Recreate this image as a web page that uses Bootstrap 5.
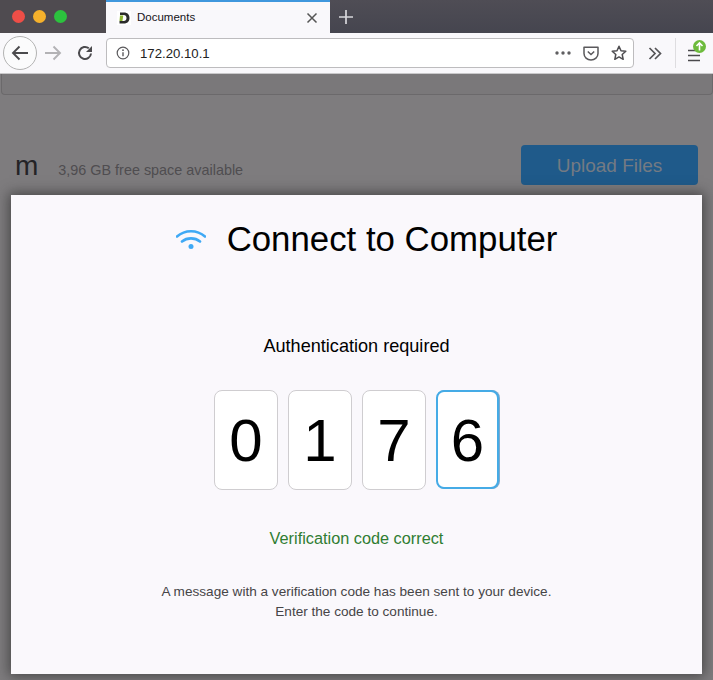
<!DOCTYPE html>
<html lang="en">
<head>
<meta charset="utf-8">
<title>Documents</title>
<link rel="stylesheet" href="https://cdn.jsdelivr.net/npm/bootstrap@5.3.0/dist/css/bootstrap.min.css">
<style>
html,body{height:680px;overflow:hidden;}
body{font-family:"Liberation Sans",Arial,sans-serif;background:#7e7c7e;position:relative;color:#000;}
.tabbar{height:33px;background:linear-gradient(#4f4d55,#45454f);}
.lights{width:106px;padding-left:12px;gap:8px;background:#4f4b50;height:33px;}
.light{width:13px;height:13px;border-radius:50%;}
.tabitem{width:224px;height:33px;background:#f9f8fb;border-top:2px solid #3f97dd;padding:0 12px 0 11px;font-size:11.500px;color:#15141a;}
.favbox{width:14px;height:14px;background:#fff;}
.tabname{margin-left:6px;}
.tabclose{margin-left:auto;}
.newtab{margin-left:9px;}
.toolbar{height:41px;background:#f9f8fb;border-bottom:1px solid #c9c8ca;padding-left:3px;}
.backbtn{width:34px;height:34px;border:1px solid #b3b3b3;border-radius:50%;background:#fbfbfc;}
.forward{margin-left:7px;}
.reload{margin-left:15px;}
.urlbar{width:528px;height:30px;margin-left:13px;background:#fff;border:1px solid #bdbcbe;border-radius:4px;padding:0 6px 0 9px;font-size:13.200px;color:#222;}
.urltext{margin-left:10px;padding-top:1px;}
.dots{margin-left:auto;}
.pocket{margin-left:12px;}
.star{margin-left:12px;}
.chev{margin-left:14px;}
.sep{width:1px;height:30px;background:#dedde0;margin-left:13px;}
.menuwrap{margin-left:12px;position:relative;width:20px;height:30px;}
.upbadge{position:absolute;left:5px;top:2px;}
.pagebar{height:21px;margin:0 0 0 1px;background:#7a787a;border:1px solid #6b696b;border-top:0;border-radius:0 0 4px 4px;}
.pagerow{margin-top:50px;height:40px;padding:0 15px 0 15px;}
.mlet{font-size:28px;line-height:40px;color:#242326;padding-top:2px;}
.freeinfo{font-size:14.400px;color:#4f4d50;margin-left:20px;padding-top:12px;}
.uploadbtn{margin-left:auto;width:177px;height:40px;background:#1f5a8a;border:0;border-radius:4px;color:#747a83;font-size:19px;padding:2px 0 0;}
.dialogbox{position:absolute;left:11px;top:195px;width:691px;height:479px;background:#faf8fc;box-shadow:0 0 12px 2px rgba(40,40,40,.65);}
.dialoghead{height:88px;padding-left:20px;}
.dialogtitle{font-size:34.800px;font-weight:400;margin:0 0 0 21px;line-height:88px;color:#000;}
.authtext{font-size:18.100px;margin-top:49px;line-height:28px;color:#000;}
.codegrid{gap:10px;margin-top:30px;}
.digit{width:64px;height:100px;background:#fff;border:1px solid #cfcdd0;border-radius:8px;font-size:60px;line-height:100px;text-align:center;color:#000;}
.digit-on{width:63px;height:99px;border:2px solid #45abe6;box-shadow:1px 0 0 #7fa9cc;line-height:98px;}
.okmsg{color:#2f7d32;font-size:16.300px;margin-top:36px;line-height:24px;}
.helptext{font-size:13.600px;line-height:20px;color:#464547;margin-top:32px;}
</style>
</head>
<body>
<div class="tabbar d-flex">
  <div class="lights d-flex align-items-center">
    <span class="light" style="background:#ee4e47"></span>
    <span class="light" style="background:#f5b12c"></span>
    <span class="light" style="background:#2cc23e"></span>
  </div>
  <div class="tabitem d-flex align-items-center">
    <svg class="favbox" viewBox="0 0 14 14"><path d="M3 1.500h4c3.400 0 5.500 2.100 5.500 5.500s-2.100 5.500-5.500 5.500H2.500V10h4.200c1.700 0 2.800-1.200 2.800-3S8.400 4 6.700 4H3z" fill="#2b2b2b"/><path d="M3 4.500h3.300L5.400 10H2.500z" fill="#8cb52f"/></svg>
    <span class="tabname">Documents</span>
    <svg class="tabclose" width="12" height="12" viewBox="0 0 12 12"><path d="M1.500 1.500l9 9M10.500 1.500l-9 9" stroke="#555" stroke-width="1.500"/></svg>
  </div>
  <svg class="newtab align-self-center" width="14" height="14" viewBox="0 0 14 14"><path d="M7 0v14M0 7h14" stroke="#d8d7db" stroke-width="1.700"/></svg>
</div>
<div class="toolbar d-flex align-items-center">
  <div class="backbtn d-flex align-items-center justify-content-center">
    <svg width="18" height="16" viewBox="0 0 18 16"><path d="M17 8H2M8.500 1.500L2 8l6.500 6.500" fill="none" stroke="#4b4a4d" stroke-width="1.900"/></svg>
  </div>
  <svg class="forward" width="18" height="16" viewBox="0 0 18 16"><path d="M1 8h15M9.500 1.500L16 8l-6.500 6.500" fill="none" stroke="#b3b2b5" stroke-width="1.900"/></svg>
  <svg class="reload" width="16" height="16" viewBox="0 0 16 16"><path d="M14 8.500A6 6 0 1 1 11.800 3.300" fill="none" stroke="#4b4a4d" stroke-width="2"/><path d="M15 1v6H9z" fill="#4b4a4d"/></svg>
  <div class="urlbar d-flex align-items-center">
    <svg width="14" height="14" viewBox="0 0 14 14"><circle cx="7" cy="7" r="5.800" fill="none" stroke="#5a595c" stroke-width="1.200"/><path d="M7 6.200v4" stroke="#5a595c" stroke-width="1.400"/><circle cx="7" cy="4.200" r=".9" fill="#5a595c"/></svg>
    <span class="urltext">172.20.10.1</span>
    <svg class="dots" width="16" height="4" viewBox="0 0 16 4"><circle cx="2" cy="2" r="1.700" fill="#5f5e61"/><circle cx="8" cy="2" r="1.700" fill="#5f5e61"/><circle cx="14" cy="2" r="1.700" fill="#5f5e61"/></svg>
    <svg class="pocket" width="16" height="15" viewBox="0 0 16 15"><path d="M1 1.200h14v6.300a7 6.500 0 0 1-14 0z" fill="none" stroke="#5a595c" stroke-width="1.500" stroke-linejoin="round"/><path d="M4.800 5.500L8 8.500l3.200-3" fill="none" stroke="#5a595c" stroke-width="1.500"/></svg>
    <svg class="star" width="16" height="16" viewBox="0 0 16 16"><path d="M8 1.300l2 4.500 4.800.5-3.600 3.200 1 4.800L8 11.900l-4.200 2.400 1-4.800L1.200 6.300 6 5.800z" fill="none" stroke="#4f4e51" stroke-width="1.500" stroke-linejoin="round"/></svg>
  </div>
  <svg class="chev" width="14" height="13" viewBox="0 0 14 13"><path d="M1.500 1l5.500 5.500L1.500 12M7 1l5.500 5.500L7 12" fill="none" stroke="#555457" stroke-width="1.700"/></svg>
  <div class="sep"></div>
  <div class="menuwrap d-flex align-items-center">
    <svg class="mt-1" width="13" height="13" viewBox="0 0 13 13"><path d="M0 1.500h12M0 6.500h12M0 11.500h12" stroke="#4b4a4d" stroke-width="1.500"/></svg>
    <svg class="upbadge" width="13" height="13" viewBox="0 0 13 13"><circle cx="6.500" cy="6.500" r="6.500" fill="#6dbb3c"/><path d="M6.500 10.500V3.500M3.500 6l3-3 3 3" fill="none" stroke="#fff" stroke-width="1.600"/></svg>
  </div>
</div>
<div class="pagebar"></div>
<div class="pagerow d-flex align-items-center">
  <span class="mlet">m</span>
  <span class="freeinfo">3,96 GB free space available</span>
  <button class="uploadbtn" type="button">Upload Files</button>
</div>

<div class="dialogbox d-flex flex-column align-items-center text-center">
  <div class="dialoghead d-flex align-items-center justify-content-center w-100">
    <svg width="30" height="22" viewBox="0 0 30 22"><path d="M1 8.500C9 1.500 21 1.500 29 8.500M6 13.500C11 9.300 19 9.300 24 13.500" fill="none" stroke="#3fa9f5" stroke-width="2.600" stroke-linecap="round"/><circle cx="15" cy="18.500" r="2.500" fill="#3fa9f5"/></svg>
    <h1 class="dialogtitle">Connect to Computer</h1>
  </div>
  <div class="authtext">Authentication required</div>
  <div class="codegrid d-flex">
    <div class="digit">0</div>
    <div class="digit">1</div>
    <div class="digit">7</div>
    <div class="digit digit-on">6</div>
  </div>
  <div class="okmsg">Verification code correct</div>
  <div class="helptext">A message with a verification code has been sent to your device.<br>Enter the code to continue.</div>
</div>
<script src="https://cdn.jsdelivr.net/npm/bootstrap@5.3.0/dist/js/bootstrap.bundle.min.js"></script>
</body>
</html>
